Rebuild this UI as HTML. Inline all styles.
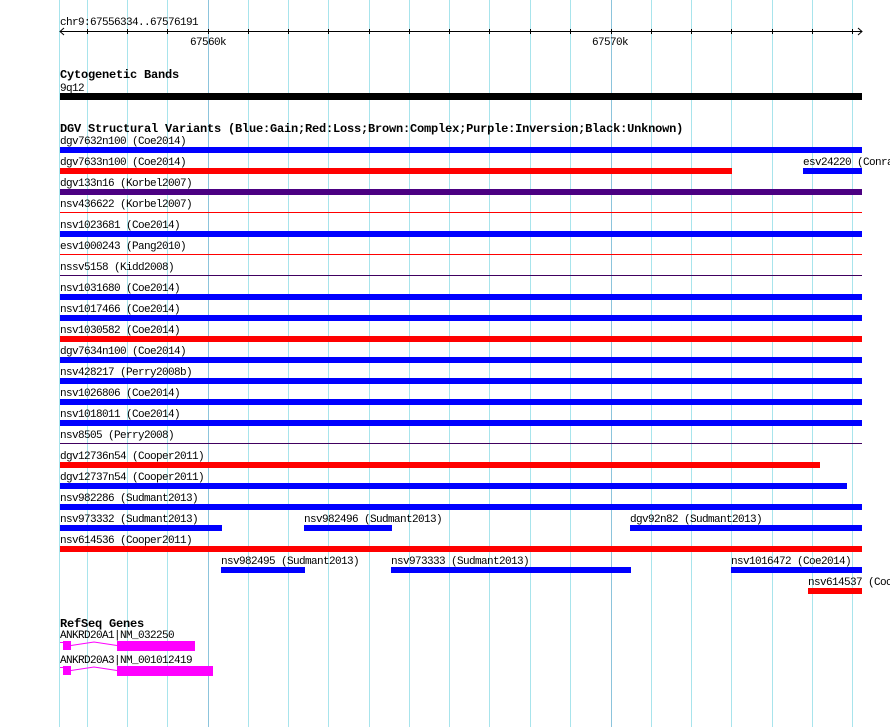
<!DOCTYPE html>
<html><head><meta charset="utf-8"><style>
html,body{margin:0;padding:0;background:#fff;}
svg{display:block;}
text{font-family:"Liberation Mono","DejaVu Sans Mono",monospace;font-size:11px;letter-spacing:-0.6px;fill:#000;}
.b{font-weight:bold;font-size:12px;letter-spacing:-0.2px;}
</style></head><body>
<svg width="890" height="727" viewBox="0 0 890 727" xmlns="http://www.w3.org/2000/svg">
<g stroke="#a8e4ec" stroke-width="1">
<line x1="59.5" y1="0" x2="59.5" y2="727"/>
<line x1="87.5" y1="0" x2="87.5" y2="727"/>
<line x1="127.5" y1="0" x2="127.5" y2="727"/>
<line x1="167.5" y1="0" x2="167.5" y2="727"/>
<line x1="248.5" y1="0" x2="248.5" y2="727"/>
<line x1="288.5" y1="0" x2="288.5" y2="727"/>
<line x1="328.5" y1="0" x2="328.5" y2="727"/>
<line x1="369.5" y1="0" x2="369.5" y2="727"/>
<line x1="409.5" y1="0" x2="409.5" y2="727"/>
<line x1="449.5" y1="0" x2="449.5" y2="727"/>
<line x1="489.5" y1="0" x2="489.5" y2="727"/>
<line x1="530.5" y1="0" x2="530.5" y2="727"/>
<line x1="570.5" y1="0" x2="570.5" y2="727"/>
<line x1="651.5" y1="0" x2="651.5" y2="727"/>
<line x1="691.5" y1="0" x2="691.5" y2="727"/>
<line x1="731.5" y1="0" x2="731.5" y2="727"/>
<line x1="772.5" y1="0" x2="772.5" y2="727"/>
<line x1="812.5" y1="0" x2="812.5" y2="727"/>
<line x1="852.5" y1="0" x2="852.5" y2="727"/>
</g>
<g stroke="#8cc4dc"><line x1="208.5" y1="0" x2="208.5" y2="727"/><line x1="611.5" y1="0" x2="611.5" y2="727"/></g>

<text x="60" y="25">chr9:67556334..67576191</text>
<g stroke="#000" fill="none">
<line x1="60" y1="31.5" x2="862" y2="31.5"/>
<polyline points="64,28 60,31.5 64,35"/>
<polyline points="858,28 862,31.5 858,35"/>
<path d="M87.5 29v5M127.5 29v5M167.5 29v5M208.5 29v5M248.5 29v5M288.5 29v5M328.5 29v5M369.5 29v5M409.5 29v5M449.5 29v5M489.5 29v5M530.5 29v5M570.5 29v5M611.5 29v5M651.5 29v5M691.5 29v5M731.5 29v5M772.5 29v5M812.5 29v5M852.5 29v5"/>
</g>
<text x="190" y="45">67560k</text>
<text x="592" y="45">67570k</text>

<text class="b" x="60" y="78">Cytogenetic Bands</text>
<text x="60" y="91">9q12</text>
<rect x="60" y="93" width="802" height="7" fill="#000"/>

<text class="b" x="60" y="132">DGV Structural Variants (Blue:Gain;Red:Loss;Brown:Complex;Purple:Inversion;Black:Unknown)</text>

<text x="60" y="144">dgv7632n100 (Coe2014)</text>
<rect x="60" y="147" width="802" height="6" fill="#0000ff"/>
<text x="60" y="165">dgv7633n100 (Coe2014)</text>
<rect x="60" y="168" width="672" height="6" fill="#ff0000"/>
<text x="803" y="165">esv24220 (Conrad2009)</text>
<rect x="803" y="168" width="59" height="6" fill="#0000ff"/>
<text x="60" y="186">dgv133n16 (Korbel2007)</text>
<rect x="60" y="189" width="802" height="6" fill="#4b0082"/>
<text x="60" y="207">nsv436622 (Korbel2007)</text>
<rect x="60" y="212" width="802" height="1" fill="#ff0000"/>
<text x="60" y="228">nsv1023681 (Coe2014)</text>
<rect x="60" y="231" width="802" height="6" fill="#0000ff"/>
<text x="60" y="249">esv1000243 (Pang2010)</text>
<rect x="60" y="254" width="802" height="1" fill="#ff0000"/>
<text x="60" y="270">nssv5158 (Kidd2008)</text>
<rect x="60" y="275" width="802" height="1" fill="#400060"/>
<text x="60" y="291">nsv1031680 (Coe2014)</text>
<rect x="60" y="294" width="802" height="6" fill="#0000ff"/>
<text x="60" y="312">nsv1017466 (Coe2014)</text>
<rect x="60" y="315" width="802" height="6" fill="#0000ff"/>
<text x="60" y="333">nsv1030582 (Coe2014)</text>
<rect x="60" y="336" width="802" height="6" fill="#ff0000"/>
<text x="60" y="354">dgv7634n100 (Coe2014)</text>
<rect x="60" y="357" width="802" height="6" fill="#0000ff"/>
<text x="60" y="375">nsv428217 (Perry2008b)</text>
<rect x="60" y="378" width="802" height="6" fill="#0000ff"/>
<text x="60" y="396">nsv1026806 (Coe2014)</text>
<rect x="60" y="399" width="802" height="6" fill="#0000ff"/>
<text x="60" y="417">nsv1018011 (Coe2014)</text>
<rect x="60" y="420" width="802" height="6" fill="#0000ff"/>
<text x="60" y="438">nsv8505 (Perry2008)</text>
<rect x="60" y="443" width="802" height="1" fill="#400060"/>
<text x="60" y="459">dgv12736n54 (Cooper2011)</text>
<rect x="60" y="462" width="760" height="6" fill="#ff0000"/>
<text x="60" y="480">dgv12737n54 (Cooper2011)</text>
<rect x="60" y="483" width="787" height="6" fill="#0000ff"/>
<text x="60" y="501">nsv982286 (Sudmant2013)</text>
<rect x="60" y="504" width="802" height="6" fill="#0000ff"/>
<text x="60" y="522">nsv973332 (Sudmant2013)</text>
<rect x="60" y="525" width="162" height="6" fill="#0000ff"/>
<text x="304" y="522">nsv982496 (Sudmant2013)</text>
<rect x="304" y="525" width="88" height="6" fill="#0000ff"/>
<text x="630" y="522">dgv92n82 (Sudmant2013)</text>
<rect x="630" y="525" width="232" height="6" fill="#0000ff"/>
<text x="60" y="543">nsv614536 (Cooper2011)</text>
<rect x="60" y="546" width="802" height="6" fill="#ff0000"/>
<text x="221" y="564">nsv982495 (Sudmant2013)</text>
<rect x="221" y="567" width="84" height="6" fill="#0000ff"/>
<text x="391" y="564">nsv973333 (Sudmant2013)</text>
<rect x="391" y="567" width="240" height="6" fill="#0000ff"/>
<text x="731" y="564">nsv1016472 (Coe2014)</text>
<rect x="731" y="567" width="131" height="6" fill="#0000ff"/>
<text x="808" y="585">nsv614537 (Cooper2011)</text>
<rect x="808" y="588" width="54" height="6" fill="#ff0000"/>

<text class="b" x="60" y="627">RefSeq Genes</text>
<text x="60" y="638">ANKRD20A1|NM_032250</text>
<polyline points="60,642.5 63,642.5" stroke="#ff00ff" fill="none"/>
<rect x="63" y="641" width="8" height="9" fill="#ff00ff"/>
<polyline points="71,645.5 94,642 117,645.5" stroke="#ff00ff" fill="none"/>
<rect x="117" y="641" width="78" height="10" fill="#ff00ff"/>
<text x="60" y="663">ANKRD20A3|NM_001012419</text>
<polyline points="60,667.5 63,667.5" stroke="#ff00ff" fill="none"/>
<rect x="63" y="666" width="8" height="9" fill="#ff00ff"/>
<polyline points="71,670.5 94,667 117,670.5" stroke="#ff00ff" fill="none"/>
<rect x="117" y="666" width="96" height="10" fill="#ff00ff"/>
</svg>
</body></html>
